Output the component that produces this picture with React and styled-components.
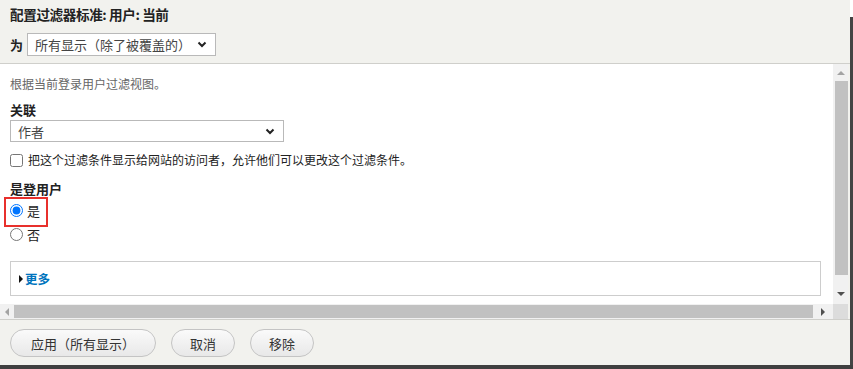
import styled, { createGlobalStyle } from 'styled-components'

const GlobalStyle = createGlobalStyle`
  html, body {
    margin: 0;
    padding: 0;
    background: #fff;
    overflow: hidden;
  }
  body {
    font-family: "Noto Sans CJK SC", "Noto Sans", sans-serif;
    color: #333;
  }
`

const Screen = styled.div`
  width: 853px;
  height: 369px;
  display: flex;
  flex-direction: column;
  background: #3f3f3f;
`

const Top = styled.div`
  display: flex;
  height: 365px;
`

const Edge = styled.div`
  width: 3px;
  display: flex;
  flex-direction: column;
  background: #444;
`

const EdgeGap = styled.div`
  height: 17px;
  background: #fff;
`

const Dialog = styled.div`
  width: 850px;
  display: flex;
  flex-direction: column;
  background: #f2f2ee;
`

const Header = styled.div`
  height: 64px;
  box-sizing: border-box;
  padding: 5px 10px 0;
  border-bottom: 1px solid #cfcfcb;
`

const Title = styled.div`
  font-size: 13.6px;
  letter-spacing: -0.4px;
  font-weight: bold;
  line-height: 18px;
  color: #222;
`

const FilterRow = styled.div`
  margin-top: 10px;
  display: flex;
  align-items: center;
  gap: 4px;
`

const Label = styled.div`
  font-size: 13px;
  font-weight: bold;
  line-height: 18px;
  color: #222;
`

const Select = styled.div`
  width: ${p => p.$w}px;
  height: ${p => p.$h}px;
  box-sizing: border-box;
  border: 1px solid #b9b9b9;
  background: #fff;
  display: flex;
  align-items: center;
  justify-content: space-between;
  padding: 0 8px 0 7px;
  font-size: 13px;
  color: #444;
`

const Body = styled.div`
  display: grid;
  grid-template-columns: 833px 15px;
  grid-template-rows: 240px 15px;
  padding-right: 2px;
`

const Content = styled.div`
  background: #fff;
  overflow: hidden;
  padding: 12px 12px 0 10px;
`

const Help = styled.div`
  font-size: 12px;
  line-height: 16px;
  color: #666;
`

const FieldLabel = styled(Label)`
  margin-top: ${p => p.$top}px;
`

const SelectWrap = styled.div`
  margin-top: 1px;
`

const CheckRow = styled.label`
  margin-top: 9px;
  display: flex;
  align-items: center;
  gap: 5px;
  font-size: 12px;
  line-height: 18px;
  color: #222;

  input {
    margin: 0;
    width: 13px;
    height: 13px;
  }
`

const RadioRow = styled.label`
  position: relative;
  display: flex;
  align-items: center;
  gap: 4px;
  height: 24px;
  font-size: 13px;
  color: #222;

  input {
    margin: 0;
    width: 13px;
    height: 13px;
  }
`

const Highlight = styled.span`
  position: absolute;
  left: -6px;
  top: -1px;
  width: 44px;
  height: 30px;
  box-sizing: border-box;
  border: 2px solid #e8302c;
  pointer-events: none;
`

const Details = styled.div`
  margin-top: 15px;
  height: 35px;
  box-sizing: border-box;
  border: 1px solid #cdcdcd;
  display: flex;
  align-items: center;
  padding-left: 8px;
  gap: 2px;
`

const Caret = styled.span`
  width: 0;
  height: 0;
  border-top: 4px solid transparent;
  border-bottom: 4px solid transparent;
  border-left: 4px solid #111;
`

const More = styled.span`
  font-size: 12.5px;
  font-weight: bold;
  color: #0074bd;
`

const VTrack = styled.div`
  background: #f1f1f1;
  display: flex;
  flex-direction: column;
  align-items: center;
`

const HTrack = styled.div`
  background: #f1f1f1;
  display: flex;
  align-items: center;
`

const ArrowBox = styled.div`
  width: ${p => p.$w || 15}px;
  height: ${p => p.$h || 15}px;
  display: flex;
  align-items: center;
  justify-content: center;
  flex-shrink: 0;
`

const Arrow = styled.span`
  width: 0;
  height: 0;
  ${p =>
    p.$dir === 'up' &&
    `border-left: 4px solid transparent; border-right: 4px solid transparent; border-bottom: 4px solid ${p.$c};`}
  ${p =>
    p.$dir === 'down' &&
    `border-left: 4px solid transparent; border-right: 4px solid transparent; border-top: 4px solid ${p.$c};`}
  ${p =>
    p.$dir === 'left' &&
    `border-top: 4px solid transparent; border-bottom: 4px solid transparent; border-right: 4px solid ${p.$c};`}
  ${p =>
    p.$dir === 'right' &&
    `border-top: 4px solid transparent; border-bottom: 4px solid transparent; border-left: 4px solid ${p.$c};`}
`

const VThumb = styled.div`
  width: 13px;
  height: 194px;
  background: #c1c1c1;
  margin-left: 2px;
`

const HThumb = styled.div`
  width: 799px;
  height: 13px;
  background: #c1c1c1;
`

const Spacer = styled.div`
  flex: 1;
`

const Corner = styled.div`
  background: #dcdcdc;
`

const Footer = styled.div`
  flex: 1;
  border-top: 1px solid #cfcfcb;
  display: flex;
  align-items: flex-start;
  gap: 15px;
  padding: 9px 10px 0;
`

const Button = styled.button`
  height: 28px;
  padding: 0 ${p => p.$pad || 18}px;
  border: 1px solid #c4c4c4;
  border-radius: 20px;
  background: linear-gradient(#fafafa, #e8e8e8);
  font-family: inherit;
  font-size: 13px;
  color: #333;
`

function Chevron() {
  return (
    <svg width="10" height="7" viewBox="0 0 10 7">
      <polyline points="1.5,1.5 5,5 8.5,1.5" fill="none" stroke="#222" strokeWidth="2" />
    </svg>
  )
}

export default function App() {
  return (
    <Screen>
      <GlobalStyle />
      <Top>
        <Dialog>
          <Header>
            <Title>配置过滤器标准: 用户: 当前</Title>
            <FilterRow>
              <Label>为</Label>
              <Select $w={189} $h={23}>
                <span>所有显示（除了被覆盖的）</span>
                <Chevron />
              </Select>
            </FilterRow>
          </Header>

          <Body>
            <Content>
              <Help>根据当前登录用户过滤视图。</Help>
              <FieldLabel $top={9}>关联</FieldLabel>
              <SelectWrap>
                <Select $w={274} $h={22}>
                  <span>作者</span>
                  <Chevron />
                </Select>
              </SelectWrap>
              <CheckRow>
                <input type="checkbox" />
                把这个过滤条件显示给网站的访问者，允许他们可以更改这个过滤条件。
              </CheckRow>
              <FieldLabel $top={11}>是登用户</FieldLabel>
              <RadioRow>
                <input type="radio" name="logged" defaultChecked />
                是
                <Highlight />
              </RadioRow>
              <RadioRow>
                <input type="radio" name="logged" />
                否
              </RadioRow>
              <Details>
                <Caret />
                <More>更多</More>
              </Details>
            </Content>

            <VTrack>
              <ArrowBox $h={17}>
                <Arrow $dir="up" $c="#a3a3a3" />
              </ArrowBox>
              <VThumb />
              <Spacer />
              <ArrowBox $h={20}>
                <Arrow $dir="down" $c="#505050" />
              </ArrowBox>
            </VTrack>

            <HTrack>
              <ArrowBox $w={14}>
                <Arrow $dir="left" $c="#a3a3a3" />
              </ArrowBox>
              <HThumb />
              <Spacer />
              <ArrowBox $w={20}>
                <Arrow $dir="right" $c="#505050" />
              </ArrowBox>
            </HTrack>
            <Corner />
          </Body>

          <Footer>
            <Button $pad={20}>应用（所有显示）</Button>
            <Button>取消</Button>
            <Button>移除</Button>
          </Footer>
        </Dialog>
        <Edge>
          <EdgeGap />
        </Edge>
      </Top>
    </Screen>
  )
}
